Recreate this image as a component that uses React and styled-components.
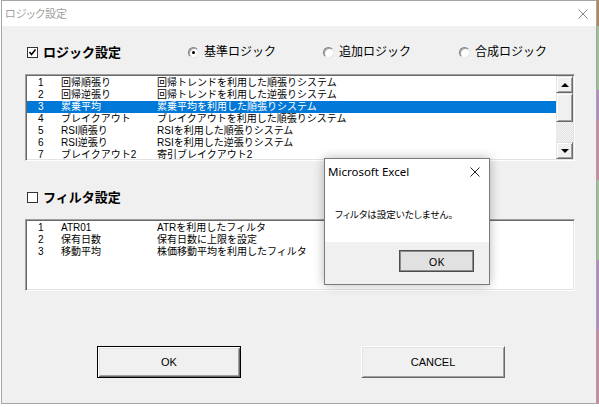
import React from "react";
import styled, { createGlobalStyle } from "styled-components";

const GlobalStyle = createGlobalStyle`
  html, body { margin: 0; padding: 0; background: #ffffff; }
  body { width: 599px; height: 407px; overflow: hidden; }
  * { box-sizing: border-box; }
`;

const JP = `"Liberation Sans", "Noto Sans CJK JP", sans-serif`;

const Screen = styled.div`
  position: relative;
  width: 599px;
  height: 407px;
  display: flex;
  align-items: flex-start;
  font-family: ${JP};
  color: #000;
`;

const Dialog = styled.div`
  margin-left: 1px;
  width: 596px;
  height: 404px;
  border: 1px solid #a5a5a5;
  background: #f0f0f0;
  display: flex;
  flex-direction: column;
`;

const RightStrip = styled.div`
  width: 2px;
  height: 404px;
  background: linear-gradient(
    #b08a5a 0 26px, #9fbf96 26px 90px, #b48ac0 90px 120px, #c98aa0 120px 180px,
    #9fbf96 180px 260px, #b48ac0 260px 330px, #c98aa0 330px 404px
  );
`;

const TitleBar = styled.div`
  height: 25px;
  background: #ffffff;
  display: flex;
  align-items: center;
  justify-content: space-between;
  padding: 0 8px 0 3px;
`;

const TitleText = styled.span`
  font-family: "Noto Sans CJK JP", sans-serif;
  font-feature-settings: "palt";
  font-size: 11px;
  color: #a0a0a0;
  line-height: 1;
`;

const Body = styled.div`
  padding: 16px 21px 0 23px;
  display: flex;
  flex-direction: column;
`;

const HeaderRow = styled.div`
  height: 20px;
  margin-top: ${(p) => p.$mt || 0}px;
  padding-left: 2px;
  display: flex;
  align-items: center;
`;

const CheckLabel = styled.label`
  width: ${(p) => p.$w || 161}px;
  display: flex;
  align-items: center;
  gap: 5px;
  font-size: 13px;
  font-weight: bold;
  line-height: 1;
`;

const CheckBox = styled.span`
  width: 11px;
  height: 11px;
  background: #fff;
  border: 1px solid #333;
  display: flex;
  align-items: center;
  justify-content: center;
  flex: none;
`;

const RadioItem = styled.label`
  width: ${(p) => p.$w}px;
  display: flex;
  align-items: center;
  gap: 5px;
  font-size: 12px;
  line-height: 1;
`;

const RadioCircle = styled.span`
  width: 11px;
  height: 11px;
  border-radius: 50%;
  background: #fff;
  border: 1px solid;
  border-color: #808080 #e8e8e8 #e8e8e8 #808080;
  box-shadow: inset 1px 1px 0 #a0a0a0;
  display: flex;
  align-items: center;
  justify-content: center;
  flex: none;
  &::after {
    content: "";
    width: 3px;
    height: 3px;
    border-radius: 50%;
    background: #000;
    display: ${(p) => (p.$on ? "block" : "none")};
  }
`;

const ListBox = styled.div`
  margin-top: ${(p) => p.$mt}px;
  height: ${(p) => p.$h}px;
  width: 550px;
  background: #fff;
  border: 1px solid;
  border-color: #a0a0a0 #ffffff #ffffff #a0a0a0;
  box-shadow: inset 1px 1px 0 #696969, inset -1px -1px 0 #e3e3e3;
  padding: 1px;
  display: flex;
`;

const Rows = styled.div`
  flex: 1;
  padding-top: 1px;
  overflow: hidden;
`;

const Row = styled.div`
  height: 12px;
  display: grid;
  grid-template-columns: 23px 96px 1fr;
  padding-left: 11px;
  font-size: 10px;
  line-height: 12px;
  white-space: nowrap;
  background: ${(p) => (p.$sel ? "#0078d7" : "transparent")};
  color: ${(p) => (p.$sel ? "#fff" : "#000")};
`;

const ScrollBar = styled.div`
  width: 17px;
  display: flex;
  flex-direction: column;
  background-color: #f4f4f4;
  background-image:
    linear-gradient(45deg, #e2e2e2 25%, transparent 25%, transparent 75%, #e2e2e2 75%),
    linear-gradient(45deg, #e2e2e2 25%, transparent 25%, transparent 75%, #e2e2e2 75%);
  background-size: 2px 2px;
  background-position: 0 0, 1px 1px;
`;

const SBButton = styled.div`
  height: ${(p) => p.$h}px;
  background: #f0f0f0;
  border: 1px solid;
  border-color: #e3e3e3 #696969 #696969 #e3e3e3;
  box-shadow: inset 1px 1px 0 #ffffff, inset -1px -1px 0 #a0a0a0;
  display: flex;
  align-items: center;
  justify-content: center;
`;

const Track = styled.div`
  flex: 1;
`;

const Arrow = styled.span`
  width: 0;
  height: 0;
  border-left: 4px solid transparent;
  border-right: 4px solid transparent;
  ${(p) =>
    p.$up ? "border-bottom: 4px solid #000;" : "border-top: 4px solid #000;"}
`;

const ButtonRow = styled.div`
  margin-top: 55px;
  padding-left: 72px;
  display: flex;
  gap: 120px;
`;

const PushButton = styled.button`
  width: 144px;
  height: 32px;
  font-family: "Liberation Sans", sans-serif;
  font-size: 11px;
  color: #000;
  background: #f0f0f0;
  padding: 0;
  border: 1px solid;
  border-color: ${(p) =>
    p.$default ? "#000 #000 #000 #000" : "#ffffff #696969 #696969 #ffffff"};
  box-shadow: ${(p) =>
    p.$default
      ? "inset 1px 1px 0 #ffffff, inset -1px -1px 0 #696969, inset 2px 2px 0 #e3e3e3, inset -2px -2px 0 #a0a0a0"
      : "inset 1px 1px 0 #e3e3e3, inset -1px -1px 0 #a0a0a0"};
`;

const MsgBox = styled.div`
  position: absolute;
  left: 324px;
  top: 158px;
  width: 166px;
  height: 127px;
  border: 1px solid #7a7a7a;
  background: #fff;
  box-shadow: 0 0 10px rgba(0, 0, 0, 0.28);
  display: flex;
  flex-direction: column;
`;

const MsgTitle = styled.div`
  height: 25px;
  display: flex;
  align-items: center;
  justify-content: space-between;
  padding: 0 9px 0 3px;
  font-family: "Noto Sans", sans-serif;
  font-size: 11.5px;
  color: #000;
`;

const MsgText = styled.div`
  flex: 1;
  padding: 24px 0 0 10px;
  font-family: "Noto Sans CJK JP", sans-serif;
  font-feature-settings: "palt";
  font-size: 9.5px;
  line-height: 12px;
  color: #000;
`;

const MsgFooter = styled.div`
  height: 42px;
  background: #f0f0f0;
  display: flex;
  justify-content: flex-end;
  padding: 8px 15px 0 0;
`;

const MsgButton = styled.button`
  width: 75px;
  height: 22px;
  padding: 0;
  background: #e1e1e1;
  border: 1px solid #4d4d4d;
  box-shadow: inset 0 0 0 1px #8c8c8c;
  font-family: "Noto Sans", sans-serif;
  font-size: 11px;
  color: #000;
`;

const CloseIcon = ({ color = "#888", size = 10 }) => (
  <svg width={size} height={size} viewBox="0 0 10 10">
    <path d="M0.5 0.5 L9.5 9.5 M9.5 0.5 L0.5 9.5" stroke={color} strokeWidth="1" fill="none" />
  </svg>
);

const CheckMark = () => (
  <svg width="9" height="9" viewBox="0 0 9 9">
    <path d="M1.5 4 L3.5 6.5 L7.5 1.5" stroke="#000" strokeWidth="1.6" fill="none" />
  </svg>
);

const logic = [
  ["1", "回帰順張り", "回帰トレンドを利用した順張りシステム"],
  ["2", "回帰逆張り", "回帰トレンドを利用した逆張りシステム"],
  ["3", "累乗平均", "累乗平均を利用した順張りシステム"],
  ["4", "ブレイクアウト", "ブレイクアウトを利用した順張りシステム"],
  ["5", "RSI順張り", "RSIを利用した順張りシステム"],
  ["6", "RSI逆張り", "RSIを利用した逆張りシステム"],
  ["7", "ブレイクアウト2", "寄引ブレイクアウト2"],
];

const filters = [
  ["1", "ATR01", "ATRを利用したフィルタ"],
  ["2", "保有日数", "保有日数に上限を設定"],
  ["3", "移動平均", "株価移動平均を利用したフィルタ"],
];

export default function App() {
  return (
    <>
      <GlobalStyle />
      <Screen>
        <Dialog>
          <TitleBar>
            <TitleText>ロジック設定</TitleText>
            <CloseIcon />
          </TitleBar>
          <Body>
            <HeaderRow>
              <CheckLabel>
                <CheckBox>
                  <CheckMark />
                </CheckBox>
                ロジック設定
              </CheckLabel>
              <RadioItem $w={135}>
                <RadioCircle $on />
                基準ロジック
              </RadioItem>
              <RadioItem $w={136}>
                <RadioCircle />
                追加ロジック
              </RadioItem>
              <RadioItem $w={100}>
                <RadioCircle />
                合成ロジック
              </RadioItem>
            </HeaderRow>
            <ListBox $mt={12} $h={87}>
              <Rows>
                {logic.map((r, i) => (
                  <Row key={r[0]} $sel={i === 2}>
                    <span>{r[0]}</span>
                    <span>{r[1]}</span>
                    <span>{r[2]}</span>
                  </Row>
                ))}
              </Rows>
              <ScrollBar>
                <SBButton $h={17}>
                  <Arrow $up />
                </SBButton>
                <SBButton $h={29} />
                <Track />
                <SBButton $h={17}>
                  <Arrow />
                </SBButton>
              </ScrollBar>
            </ListBox>
            <HeaderRow $mt={26}>
              <CheckLabel>
                <CheckBox />
                フィルタ設定
              </CheckLabel>
            </HeaderRow>
            <ListBox $mt={12} $h={72}>
              <Rows>
                {filters.map((r) => (
                  <Row key={r[0]}>
                    <span>{r[0]}</span>
                    <span>{r[1]}</span>
                    <span>{r[2]}</span>
                  </Row>
                ))}
              </Rows>
            </ListBox>
            <ButtonRow>
              <PushButton $default>OK</PushButton>
              <PushButton>CANCEL</PushButton>
            </ButtonRow>
          </Body>
        </Dialog>
        <RightStrip />
        <MsgBox>
          <MsgTitle>
            <span>Microsoft Excel</span>
            <CloseIcon color="#222" size={10} />
          </MsgTitle>
          <MsgText>フィルタは設定いたしません。</MsgText>
          <MsgFooter>
            <MsgButton>OK</MsgButton>
          </MsgFooter>
        </MsgBox>
      </Screen>
    </>
  );
}
